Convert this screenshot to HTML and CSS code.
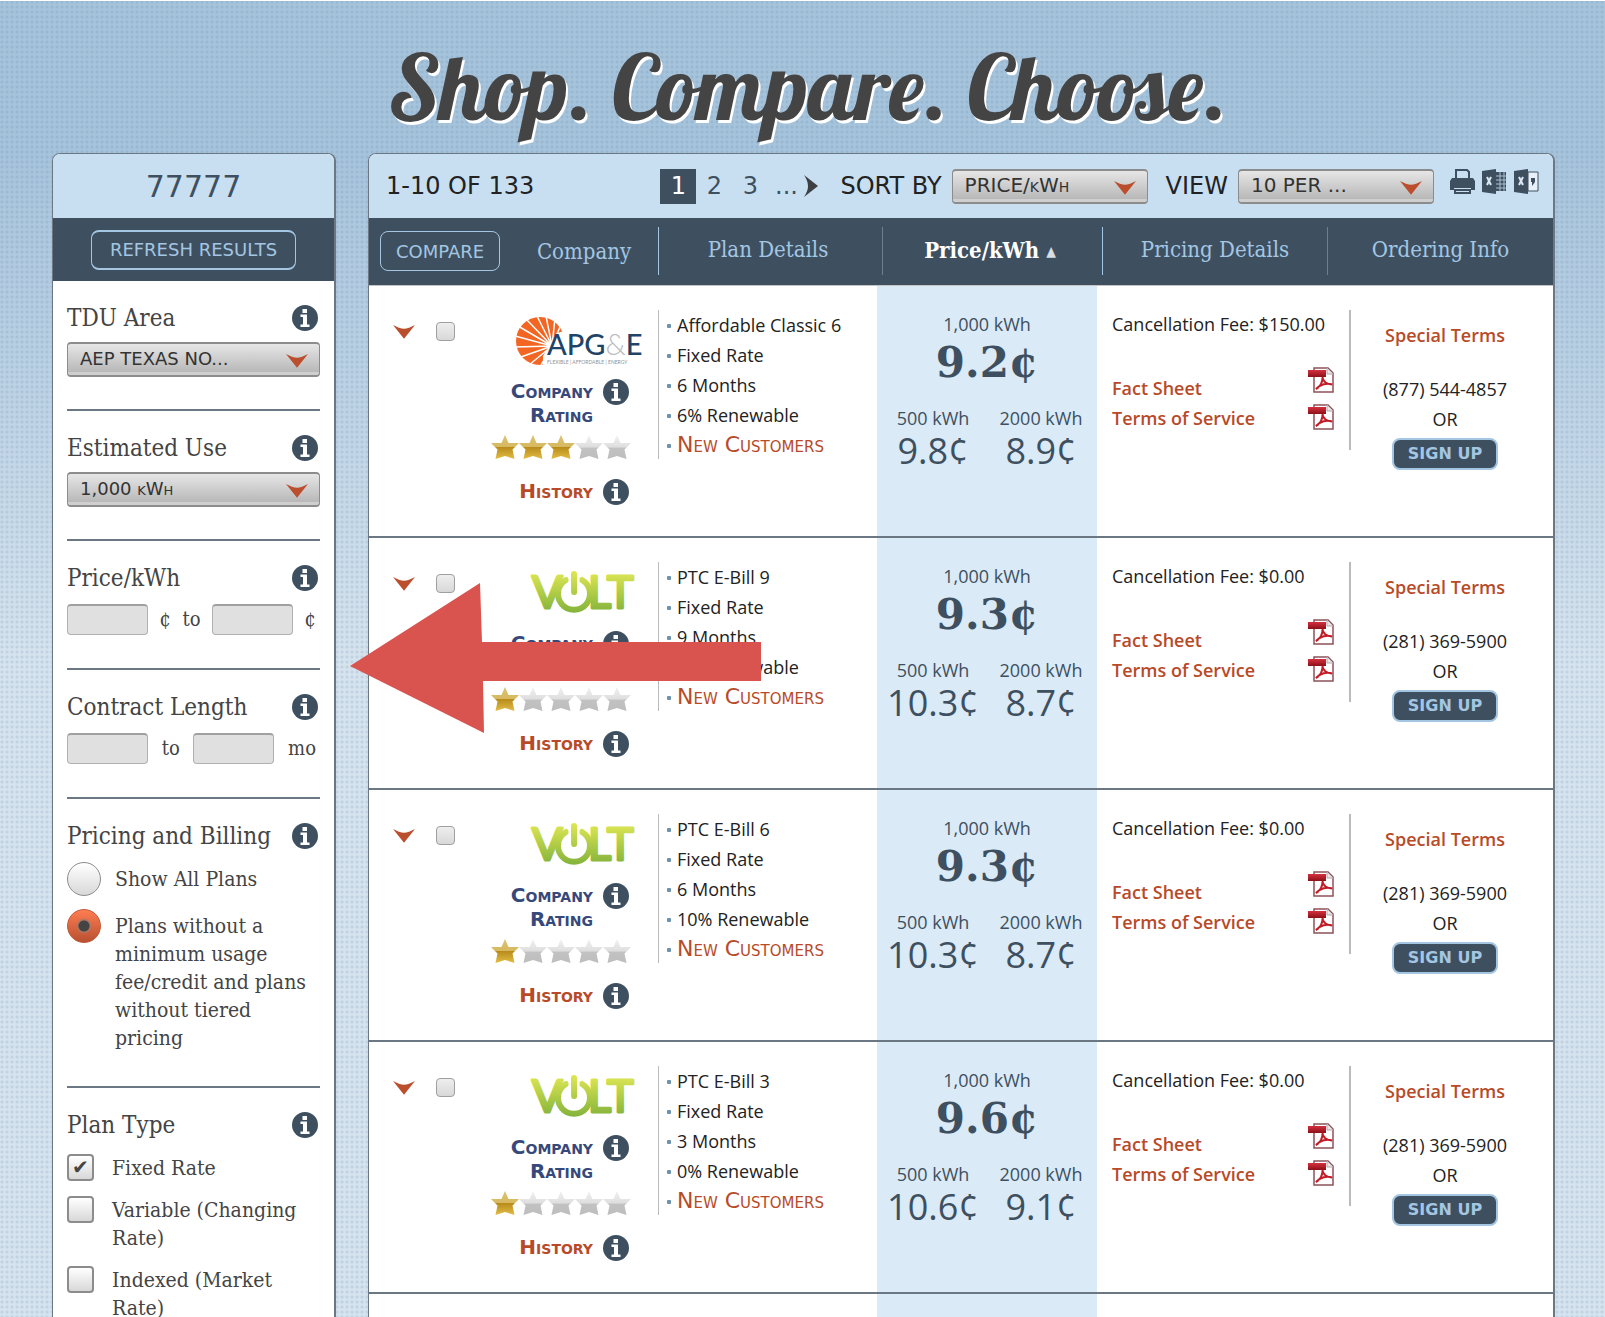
FILE: index.html
```html
<!DOCTYPE html>
<html lang="en">
<head>
  <meta charset="UTF-8">
  <title>Shop. Compare. Choose.</title>
  <link rel="stylesheet" href="styles.css">
</head>
<body>
  <!-- Shared icons -->
  <svg class="sprite" width="0" height="0" aria-hidden="true">
    <defs>
      <linearGradient id="goldFill" x1="0" y1="0" x2="0" y2="1">
        <stop offset="0" stop-color="#dcc172"/>
        <stop offset="0.5" stop-color="#d6b95f"/>
        <stop offset="0.52" stop-color="#b98c1c"/>
        <stop offset="1" stop-color="#e2bd45"/>
      </linearGradient>
      <linearGradient id="greyFill" x1="0" y1="0" x2="0" y2="1">
        <stop offset="0" stop-color="#f2f2f2"/>
        <stop offset="0.5" stop-color="#dedede"/>
        <stop offset="0.55" stop-color="#c2c2c2"/>
        <stop offset="1" stop-color="#bdbdbd"/>
      </linearGradient>
      <linearGradient id="voltFill" gradientUnits="userSpaceOnUse" x1="0" y1="2" x2="0" y2="42">
        <stop offset="0" stop-color="#dde653"/>
        <stop offset="1" stop-color="#85b43c"/>
      </linearGradient>
      <linearGradient id="pdfFill" x1="0" y1="0" x2="0" y2="1">
        <stop offset="0" stop-color="#d5303f"/>
        <stop offset="1" stop-color="#8d1018"/>
      </linearGradient>
    </defs>
    <symbol id="info" viewBox="0 0 26 26">
      <circle cx="13" cy="13" r="13" fill="#3e5060"/>
      <path d="M10.5 4h4.500v4h-4.500zM8.500 9.500h6.500v10h2.500v2.500h-9v-2.500h2.500v-7.500h-2.500z" fill="#fff"/>
    </symbol>
    <symbol id="chevron" viewBox="0 0 24 16">
      <path d="M0 1Q7 5 12 5Q17 5 24 1L12 16z" fill="#bb4e2c"/>
    </symbol>
    <symbol id="star" viewBox="0 0 28 24">
      <path d="M14 0L17.500 8H28L21.500 14.500L23.500 24L14 21L4.500 24L6.500 14.500L0 8H10.500z"/>
    </symbol>
    <symbol id="pdf" viewBox="0 0 26 26">
      <path d="M6 1h14l5 5v19H6z" fill="#fff" stroke="#8d5159" stroke-width="1.500"/>
      <path d="M19 1v6h6" fill="#e8e8e8" stroke="#b5a5a8"/>
      <path d="M0 3h18v7H0z" fill="url(#pdfFill)"/>
      <path d="M8 22c4-2 7-7 6.500-12c0 4 4 7.500 9.500 7.500c-5-2-12 0-16 4.500z" fill="none" stroke="#c41a26" stroke-width="2"/>
    </symbol>
    <symbol id="power" viewBox="0 0 104 44">
      <path d="M36 10a16 16 0 1 0 16 0" fill="#fff" stroke="url(#voltFill)" stroke-width="6" stroke-linecap="round"/>
      <path d="M44 0V24" stroke="#fff" stroke-width="11"/>
      <path d="M44 4L44.100 22" fill="none" stroke="url(#voltFill)" stroke-width="6" stroke-linecap="round"/>
    </symbol>
    <symbol id="sunburst" viewBox="0 0 126 50">
      <circle cx="25" cy="25" r="24" fill="#f26522"/>
      <path d="M37 30L22 0M37 30L11 3M37 30L3 10M37 30L0 20M37 30L0 31M37 30L3 42M37 30L14 49M37 30L25 51M37 30L31 0M37 30L40 2M37 30L47 6" stroke="#fff" stroke-width="1.500"/>
      <path d="M42 17L60 12V50H28L28 40z" fill="#fff"/>
    </symbol>
  </svg>

  <h1 class="page-title">Shop. Compare. Choose.</h1>

  <div class="layout">

    <!-- Filters -->
    <aside class="panel filters">
      <div class="panel-head zip">77777</div>
      <div class="filter-action">
        <button class="outline-btn refresh" type="button">REFRESH RESULTS</button>
      </div>

      <section class="filter">
        <div class="filter-head"><label for="tdu">TDU Area</label><svg class="info"><use href="#info"/></svg></div>
        <div class="select-box">
          <select id="tdu"><option>AEP TEXAS NO...</option></select>
          <svg class="chevron"><use href="#chevron"/></svg>
        </div>
      </section>

      <section class="filter">
        <div class="filter-head"><label for="use">Estimated Use</label><svg class="info"><use href="#info"/></svg></div>
        <div class="select-box">
          <select id="use"><option>1,000 kWh</option></select>
          <svg class="chevron"><use href="#chevron"/></svg>
        </div>
      </section>

      <section class="filter">
        <div class="filter-head"><label for="priceMin">Price/kWh</label><svg class="info"><use href="#info"/></svg></div>
        <div class="range">
          <input id="priceMin" type="text"><span>¢</span><span>to</span><input type="text" aria-label="Maximum price"><span>¢</span>
        </div>
      </section>

      <section class="filter">
        <div class="filter-head"><label for="lengthMin">Contract Length</label><svg class="info"><use href="#info"/></svg></div>
        <div class="range">
          <input id="lengthMin" type="text"><span>to</span><input type="text" aria-label="Maximum length"><span>mo</span>
        </div>
      </section>

      <section class="filter">
        <div class="filter-head"><h2>Pricing and Billing</h2><svg class="info"><use href="#info"/></svg></div>
        <label class="choice radio"><input type="radio" name="billing"><span>Show All Plans</span></label>
        <label class="choice radio"><input type="radio" name="billing" checked><span>Plans without a minimum usage fee/credit and plans without tiered pricing</span></label>
      </section>

      <section class="filter">
        <div class="filter-head"><h2>Plan Type</h2><svg class="info"><use href="#info"/></svg></div>
        <label class="choice check"><input type="checkbox" checked><span>Fixed Rate</span></label>
        <label class="choice check"><input type="checkbox"><span>Variable (Changing Rate)</span></label>
        <label class="choice check"><input type="checkbox"><span>Indexed (Market Rate)</span></label>
      </section>
    </aside>

    <!-- Results -->
    <main class="panel results">
      <div class="panel-head toolbar">
        <span class="count">1-10 OF 133</span>
        <nav class="pager">
          <a class="current" href="#">1</a>
          <a href="#">2</a>
          <a href="#">3</a>
          <span>...</span>
          <a class="next" href="#" aria-label="Next"><svg width="14" height="22" viewBox="0 0 14 22"><path d="M0 0Q4 6 4 11Q4 16 0 22L14 11z" fill="#3d3f42"/></svg></a>
        </nav>
        <label for="sort">SORT BY</label>
        <div class="select-box sort">
          <select id="sort"><option>PRICE/kWh</option></select>
          <svg class="chevron"><use href="#chevron"/></svg>
        </div>
        <label for="view">VIEW</label>
        <div class="select-box view">
          <select id="view"><option>10 PER ...</option></select>
          <svg class="chevron"><use href="#chevron"/></svg>
        </div>
        <div class="exports">
          <a href="#" aria-label="Print"><svg width="25" height="25" viewBox="0 0 25 25">
            <path d="M6 10V1h11l2 2v7" fill="#c9dff2" stroke="#3e5060" stroke-width="2"/>
            <path d="M2 9h21l2 3v9h-4v-2H4v2H0v-9z" fill="#3e5060"/>
            <path d="M5 21h15v3H5z" fill="#c9dff2" stroke="#3e5060" stroke-width="2"/>
          </svg></a>
          <a href="#" aria-label="Excel"><svg width="25" height="25" viewBox="0 0 25 25">
            <path d="M0 2L14 0v25L0 23z" fill="#3e5060"/>
            <path d="M14 3h10v19H14z" fill="#3e5060"/>
            <path d="M14 7h10M14 11h10M14 15h10M14 19h10M18 3v19M22 3v19" stroke="#a9bfd1"/>
            <path d="M5 8l4 8M9 8l-4 8" stroke="#dbe9f5" stroke-width="2"/>
          </svg></a>
          <a href="#" aria-label="CSV"><svg width="25" height="25" viewBox="0 0 25 25">
            <path d="M14 3h10v19H14z" fill="#e8f1f9" stroke="#3e5060"/>
            <path d="M0 2L14 0v25L0 23z" fill="#3e5060"/>
            <path d="M5 8l4 8M9 8l-4 8" stroke="#dbe9f5" stroke-width="2"/>
            <path d="M17 9h4v4l-3 4v-4h-1z" fill="#3e5060"/>
          </svg></a>
        </div>
      </div>

      <table class="plans">
        <colgroup>
          <col class="col-select"><col class="col-company"><col><col class="col-price"><col class="col-pricing"><col class="col-gap"><col class="col-order">
        </colgroup>
        <thead>
          <tr>
            <th colspan="2"><div class="head-first"><button class="outline-btn" type="button">COMPARE</button><a href="#">Company</a></div></th>
            <th><div class="head-cell">Plan Details</div></th>
            <th class="shift"><div class="head-cell sorted dim">Price/kWh <small>▲</small></div></th>
            <th class="shift"><div class="head-cell">Pricing Details</div></th>
            <th colspan="2"><div class="head-cell dim">Ordering Info</div></th>
          </tr>
        </thead>
        <tbody>
          <tr>
            <td><div class="pick"><svg class="chevron"><use href="#chevron"/></svg><input type="checkbox" aria-label="Compare Affordable Classic 6"></div></td>
            <td class="company">
              <svg class="logo apge" width="126" height="50" viewBox="0 0 126 50">
                <use href="#sunburst"/>
                <text class="apge-name" x="32" y="39">APG<tspan class="amp">&amp;</tspan>E</text>
                <text class="apge-tag" x="32" y="48">FLEXIBLE | AFFORDABLE | ENERGY</text>
              </svg>
              <div class="rating"><span>Company Rating</span><svg class="info"><use href="#info"/></svg></div>
              <div class="stars"><svg class="on"><use href="#star"/></svg><svg class="on"><use href="#star"/></svg><svg class="on"><use href="#star"/></svg><svg><use href="#star"/></svg><svg><use href="#star"/></svg></div>
              <div class="history"><a href="#">History</a><svg class="info"><use href="#info"/></svg></div>
            </td>
            <td><ul class="details"><li>Affordable Classic 6</li><li>Fixed Rate</li><li>6 Months</li><li>6% Renewable</li><li><a href="#">New Customers</a></li></ul></td>
            <td class="price">
              <div class="tier">1,000 kWh</div>
              <div class="main-price">9.2¢</div>
              <div class="tiers"><div>500 kWh<b>9.8¢</b></div><div>2000 kWh<b>8.9¢</b></div></div>
            </td>
            <td colspan="2" class="pricing">
              <div class="pricing-box">
                <p>Cancellation Fee: $150.00</p>
                <div class="docs"><div><a href="#">Fact Sheet</a><a href="#">Terms of Service</a></div><div class="pdfs"><svg><use href="#pdf"/></svg><svg><use href="#pdf"/></svg></div></div>
              </div>
            </td>
            <td class="order"><a href="#">Special Terms</a><span class="phone">(877) 544-4857</span><span>OR</span><button class="sign-up" type="button">SIGN UP</button></td>
          </tr>
          <tr>
            <td><div class="pick"><svg class="chevron"><use href="#chevron"/></svg><input type="checkbox" aria-label="Compare PTC E-Bill 9"></div></td>
            <td class="company">
              <svg class="logo" width="104" height="50" viewBox="0 -2 104 50">
                <text class="volt-name" x="2" y="38">V</text>
                <text class="volt-name" x="58" y="38">LT</text>
                <use href="#power" width="104" height="44"/>
              </svg>
              <div class="rating"><span>Company Rating</span><svg class="info"><use href="#info"/></svg></div>
              <div class="stars"><svg class="on"><use href="#star"/></svg><svg><use href="#star"/></svg><svg><use href="#star"/></svg><svg><use href="#star"/></svg><svg><use href="#star"/></svg></div>
              <div class="history"><a href="#">History</a><svg class="info"><use href="#info"/></svg></div>
            </td>
            <td><ul class="details"><li>PTC E-Bill 9</li><li>Fixed Rate</li><li>9 Months</li><li>0% Renewable</li><li><a href="#">New Customers</a></li></ul></td>
            <td class="price">
              <div class="tier">1,000 kWh</div>
              <div class="main-price">9.3¢</div>
              <div class="tiers"><div>500 kWh<b>10.3¢</b></div><div>2000 kWh<b>8.7¢</b></div></div>
            </td>
            <td colspan="2" class="pricing">
              <div class="pricing-box">
                <p>Cancellation Fee: $0.00</p>
                <div class="docs"><div><a href="#">Fact Sheet</a><a href="#">Terms of Service</a></div><div class="pdfs"><svg><use href="#pdf"/></svg><svg><use href="#pdf"/></svg></div></div>
              </div>
            </td>
            <td class="order"><a href="#">Special Terms</a><span class="phone">(281) 369-5900</span><span>OR</span><button class="sign-up" type="button">SIGN UP</button></td>
          </tr>
          <tr>
            <td><div class="pick"><svg class="chevron"><use href="#chevron"/></svg><input type="checkbox" aria-label="Compare PTC E-Bill 6"></div></td>
            <td class="company">
              <svg class="logo" width="104" height="50" viewBox="0 -2 104 50">
                <text class="volt-name" x="2" y="38">V</text>
                <text class="volt-name" x="58" y="38">LT</text>
                <use href="#power" width="104" height="44"/>
              </svg>
              <div class="rating"><span>Company Rating</span><svg class="info"><use href="#info"/></svg></div>
              <div class="stars"><svg class="on"><use href="#star"/></svg><svg><use href="#star"/></svg><svg><use href="#star"/></svg><svg><use href="#star"/></svg><svg><use href="#star"/></svg></div>
              <div class="history"><a href="#">History</a><svg class="info"><use href="#info"/></svg></div>
            </td>
            <td><ul class="details"><li>PTC E-Bill 6</li><li>Fixed Rate</li><li>6 Months</li><li>10% Renewable</li><li><a href="#">New Customers</a></li></ul></td>
            <td class="price">
              <div class="tier">1,000 kWh</div>
              <div class="main-price">9.3¢</div>
              <div class="tiers"><div>500 kWh<b>10.3¢</b></div><div>2000 kWh<b>8.7¢</b></div></div>
            </td>
            <td colspan="2" class="pricing">
              <div class="pricing-box">
                <p>Cancellation Fee: $0.00</p>
                <div class="docs"><div><a href="#">Fact Sheet</a><a href="#">Terms of Service</a></div><div class="pdfs"><svg><use href="#pdf"/></svg><svg><use href="#pdf"/></svg></div></div>
              </div>
            </td>
            <td class="order"><a href="#">Special Terms</a><span class="phone">(281) 369-5900</span><span>OR</span><button class="sign-up" type="button">SIGN UP</button></td>
          </tr>
          <tr>
            <td><div class="pick"><svg class="chevron"><use href="#chevron"/></svg><input type="checkbox" aria-label="Compare PTC E-Bill 3"></div></td>
            <td class="company">
              <svg class="logo" width="104" height="50" viewBox="0 -2 104 50">
                <text class="volt-name" x="2" y="38">V</text>
                <text class="volt-name" x="58" y="38">LT</text>
                <use href="#power" width="104" height="44"/>
              </svg>
              <div class="rating"><span>Company Rating</span><svg class="info"><use href="#info"/></svg></div>
              <div class="stars"><svg class="on"><use href="#star"/></svg><svg><use href="#star"/></svg><svg><use href="#star"/></svg><svg><use href="#star"/></svg><svg><use href="#star"/></svg></div>
              <div class="history"><a href="#">History</a><svg class="info"><use href="#info"/></svg></div>
            </td>
            <td><ul class="details"><li>PTC E-Bill 3</li><li>Fixed Rate</li><li>3 Months</li><li>0% Renewable</li><li><a href="#">New Customers</a></li></ul></td>
            <td class="price">
              <div class="tier">1,000 kWh</div>
              <div class="main-price">9.6¢</div>
              <div class="tiers"><div>500 kWh<b>10.6¢</b></div><div>2000 kWh<b>9.1¢</b></div></div>
            </td>
            <td colspan="2" class="pricing">
              <div class="pricing-box">
                <p>Cancellation Fee: $0.00</p>
                <div class="docs"><div><a href="#">Fact Sheet</a><a href="#">Terms of Service</a></div><div class="pdfs"><svg><use href="#pdf"/></svg><svg><use href="#pdf"/></svg></div></div>
              </div>
            </td>
            <td class="order"><a href="#">Special Terms</a><span class="phone">(281) 369-5900</span><span>OR</span><button class="sign-up" type="button">SIGN UP</button></td>
          </tr>
          <tr class="tail"><td></td><td></td><td></td><td class="price"></td><td colspan="2"></td><td></td></tr>
        </tbody>
      </table>

      <!-- Arrow pointing at the filters -->
      <svg class="callout" width="412" height="152" viewBox="0 0 412 152">
        <path d="M0 83L130 0L132 59H411V98H133L134 150z" fill="#d9534f"/>
      </svg>
    </main>

  </div>
</body>
</html>
```
FILE: styles.css
```css
* {
  box-sizing: border-box;
}

html {
  height: 100%;
}

body {
  margin: 0;
  height: 100%;
  overflow: hidden;
  border-top: 1px solid #fff;
  display: flex;
  flex-direction: column;
  font-family: "Open Sans", "Noto Sans", sans-serif;
  font-size: 18px;
  color: #222;
  background:
    radial-gradient(circle at 2px 2px, rgba(80, 115, 150, 0.15) 1px, transparent 2px) 0 0 / 5px 5px,
    linear-gradient(#a6c3dc 0, #a6c3dc 150px, #d5e3ee 660px, #d5e3ee 100%);
}

a {
  color: #b84a28;
  text-decoration: none;
}

.sprite {
  position: absolute;
}

.page-title {
  margin: 0;
  padding: 30px 0 0 10px;
  height: 152px;
  flex-shrink: 0;
  text-align: center;
  font-family: Lobster, "Liberation Serif", serif;
  font-size: 91px;
  font-weight: normal;
  line-height: 110px;
  color: #444;
  text-shadow: 2px 3px 0 #fff;
}

.layout {
  flex: 1;
  display: flex;
  gap: 32px;
  padding: 0 50px 0 52px;
}

.panel {
  background: #fff;
  border: 2px solid #6b7883;
  border-width: 1px 2px 0 1px;
  border-radius: 8px 8px 0 0;
}

.panel-head {
  height: 64px;
  background: #c8dff2;
  border-radius: 7px 7px 0 0;
}

/* Filters */
.filters {
  width: 284px;
  flex-shrink: 0;
  font-family: "DejaVu Serif Condensed", "DejaVu Serif", serif;
  color: #444;
}

.zip {
  display: flex;
  align-items: center;
  justify-content: center;
  font-family: "DejaVu Sans", sans-serif;
  font-size: 30px;
  color: #3e5060;
}

.filter-action {
  height: 63px;
  display: flex;
  align-items: center;
  justify-content: center;
  background: #3e5060;
}

.outline-btn {
  height: 40px;
  padding: 0 15px;
  border: 1px solid #a4c6e2;
  border-radius: 8px;
  background: transparent;
  font-family: "DejaVu Sans", sans-serif;
  font-size: 18px;
  color: #a4c6e2;
}

.refresh {
  padding: 0 18px;
  border-width: 2px 1px;
}

.filter {
  margin: 0 14px;
  padding: 20px 0 32px;
  border-bottom: 2px solid #6b7883;
}

.filter-head {
  height: 34px;
  display: flex;
  align-items: center;
  justify-content: space-between;
  margin-bottom: 7px;
  font-size: 24px;
  white-space: nowrap;
}

.filter-head h2 {
  margin: 0;
  font-size: 24px;
  font-weight: normal;
}

.info {
  width: 26px;
  height: 26px;
  flex-shrink: 0;
}

.filter-head .info {
  margin-right: 2px;
}

.select-box {
  position: relative;
}

.select-box select {
  appearance: none;
  display: block;
  width: 100%;
  height: 35px;
  padding: 0 40px 2px 12px;
  border: 2px solid #8c8c8c;
  border-width: 2px 1px;
  border-radius: 4px;
  background: linear-gradient(#e6e6e6, #b8b8b8 90%, #cfcfcf 91%);
  font-family: "DejaVu Sans", sans-serif;
  font-size: 18px;
  font-variant: small-caps;
  color: #333;
}

.chevron {
  width: 22px;
  height: 15px;
}

.select-box .chevron {
  position: absolute;
  right: 12px;
  top: 11px;
  pointer-events: none;
}

.range {
  display: flex;
  align-items: center;
  justify-content: space-between;
  font-size: 20px;
  padding-right: 4px;
  height: 34px;
}

.range input {
  width: 81px;
  height: 31px;
  border: 1px solid #b0b0b0;
  border-top: 2px solid #a0a0a0;
  border-radius: 4px;
  background: #e0e0e0;
}

.choice {
  display: flex;
  align-items: flex-start;
  gap: 14px;
  font-size: 21px;
  line-height: 28px;
  margin-bottom: 14px;
}

.filter-head + .choice {
  margin-top: 12px;
}

.choice.radio {
  margin-bottom: 19px;
}

.choice:last-child {
  margin-bottom: 2px;
}

.choice input {
  appearance: none;
  flex-shrink: 0;
  margin: 0;
}

.radio input {
  width: 34px;
  height: 34px;
  margin: -3px 0;
  border: 1px solid #8c8c8c;
  border-radius: 50%;
  background: linear-gradient(#fff, #d8d8d8);
}

.radio input:checked {
  border-color: #c05a38;
  background: radial-gradient(circle, #444 5px, #a87766 6px, transparent 8px), linear-gradient(#ff7d52, #b85030);
}

.check {
  gap: 18px;
}

.check input {
  width: 27px;
  height: 27px;
  border: 2px solid #8c8c8c;
  border-radius: 4px;
  background: linear-gradient(#fff, #d8d8d8);
}

.check input:checked::before {
  content: "✔";
  display: block;
  font: 20px/22px "DejaVu Sans", sans-serif;
  text-align: center;
  color: #444;
}

/* Results */
.results {
  position: relative;
  flex: 1;
  min-width: 0;
}

.toolbar {
  display: flex;
  align-items: center;
  padding: 0 14px 0 17px;
  font-family: "DejaVu Sans", sans-serif;
  font-size: 24px;
  color: #222;
}

.pager {
  display: flex;
  align-items: center;
  margin-left: auto;
  margin-right: 22px;
}

.pager a,
.pager span {
  width: 36px;
  line-height: 35px;
  text-align: center;
  color: #3e5060;
}

.pager .current {
  background: #3e5060;
  color: #fff;
}

.pager .next {
  width: 14px;
  display: flex;
}

.toolbar .select-box {
  width: 196px;
  margin: 0 18px 0 10px;
}

.toolbar .view {
  margin-right: 16px;
}

.toolbar select {
  font-size: 20px;
}

.exports {
  display: flex;
  gap: 7px;
  margin-bottom: 10px;
}

.exports svg {
  display: block;
}

.plans {
  width: 100%;
  table-layout: fixed;
  border-collapse: collapse;
}

.col-select {
  width: 118px;
}

.col-company {
  width: 171px;
}

.col-price {
  width: 220px;
}

.col-pricing {
  width: 230px;
}

.col-gap {
  width: 24px;
}

.col-order {
  width: 202px;
}

.plans th {
  height: 67px;
  padding: 0;
  background: #3e5060;
  border-bottom: 1px solid #c4c4c4;
  font-family: "DejaVu Serif Condensed", "DejaVu Serif", serif;
  font-size: 22px;
  font-weight: normal;
  color: #a4c6e2;
}

.plans .shift {
  padding-left: 5px;
}

.head-first {
  display: flex;
  align-items: center;
  padding-left: 11px;
}

.head-first a {
  flex: 1;
  padding-left: 10px;
  color: #a4c6e2;
}

.head-cell {
  height: 48px;
  line-height: 46px;
  border-left: 1px solid #a4c6e2;
  white-space: nowrap;
}

.head-cell.dim {
  border-color: #6b7f90;
}

.head-cell.sorted {
  font-weight: bold;
  color: #fff;
}

.head-cell small {
  font-size: 14px;
  vertical-align: 2px;
  color: #d8dde2;
}

.plans td {
  height: 252px;
  padding: 24px 0 0;
  vertical-align: top;
  border-bottom: 2px solid #6b7883;
}

.plans .tail td {
  height: 30px;
  border: 0;
}

.pick {
  display: flex;
  align-items: center;
  gap: 21px;
  padding: 12px 0 0 24px;
}

.pick input {
  appearance: none;
  width: 19px;
  height: 19px;
  margin: 0;
  border: 1px solid #a0a0a0;
  border-radius: 4px;
  background: linear-gradient(#eee, #d8d8d8);
}

.company {
  font-family: "DejaVu Sans", sans-serif;
  font-variant: small-caps;
  font-weight: bold;
  font-size: 20px;
  line-height: 24px;
  color: #37487a;
}

.logo {
  display: block;
  margin: 6px 0 0 43px;
  overflow: visible;
  font-family: Lato, sans-serif;
  font-variant: normal;
}

.logo.apge {
  margin-left: 28px;
}

.apge-name {
  font-size: 29px;
  font-weight: 500;
  fill: #1f4468;
}

.apge-tag {
  font-size: 5px;
  font-weight: 400;
  fill: #8f9499;
}

.amp {
  font-weight: 300;
  fill: #b9bdc2;
}

.volt-name {
  font-size: 45px;
  font-weight: 400;
  fill: url(#voltFill);
  stroke: url(#voltFill);
  stroke-width: 3px;
  stroke-linejoin: round;
}

.rating,
.history {
  display: flex;
  justify-content: flex-end;
  gap: 10px;
  margin-top: 13px;
  padding-right: 29px;
  text-align: right;
}

.rating span {
  width: 90px;
}

.stars {
  display: flex;
  margin: 8px 0 0 4px;
}

.stars svg {
  width: 28px;
  height: 24px;
  fill: url(#greyFill);
}

.stars .on {
  fill: url(#goldFill);
}

.history {
  margin-top: 20px;
}

.details {
  list-style: none;
  margin: 0;
  padding: 0 0 0 8px;
  border-left: 1px solid #bbb;
  line-height: 30px;
  height: 149px;
}

.details li {
  display: flex;
  white-space: nowrap;
}

.details li::before {
  content: "";
  width: 4px;
  height: 4px;
  margin: 14px 6px 0 0;
  border-radius: 1px;
  background: #6d92b0;
}

.details a {
  font-family: "DejaVu Sans", sans-serif;
  font-variant: small-caps;
  font-size: 22px;
}

.plans .price {
  background: #daeaf7;
  color: #3e5060;
  text-align: center;
}

.tier {
  line-height: 28px;
}

.main-price {
  font-family: "DejaVu Serif", serif;
  font-size: 42px;
  font-weight: bold;
  line-height: 50px;
}

.tiers {
  display: flex;
  justify-content: center;
  gap: 16px;
  margin-top: 18px;
  line-height: 24px;
}

.tiers > div {
  width: 92px;
  white-space: nowrap;
}

.tiers b {
  display: block;
  font-size: 36px;
  font-weight: normal;
  line-height: 42px;
}

.pricing-box {
  height: 140px;
  padding: 0 15px;
  border-right: 2px solid #bbb;
}

.pricing-box p {
  margin: 0;
  line-height: 28px;
  white-space: nowrap;
}

.docs {
  display: flex;
  justify-content: space-between;
  margin-top: 29px;
}

.docs a {
  display: block;
  line-height: 30px;
  padding-top: 6px;
  font-weight: 600;
}

.docs a + a {
  padding-top: 0;
}

.pdfs {
  display: flex;
  flex-direction: column;
  gap: 11px;
}

.pdfs svg {
  width: 26px;
  height: 26px;
}

.order {
  text-align: center;
}

.order > * {
  display: block;
  line-height: 30px;
}

/* the divider sits left of this cell, so the stack leans left a little */
.plans .order {
  padding-right: 14px;
}

.order > a {
  padding-top: 10px;
  font-weight: 600;
}

.order .phone {
  margin-top: 24px;
}

.order .sign-up {
  height: 32px;
  margin: 4px auto 0;
  padding: 0 14px;
  border: 2px solid #a4c6e2;
  border-radius: 8px;
  background: #3e5060;
  font-family: "DejaVu Sans", sans-serif;
  font-size: 16px;
  font-weight: bold;
  line-height: 26px;
  color: #a4c6e2;
}

.callout {
  position: absolute;
  left: -19px;
  top: 429px;
}
```
